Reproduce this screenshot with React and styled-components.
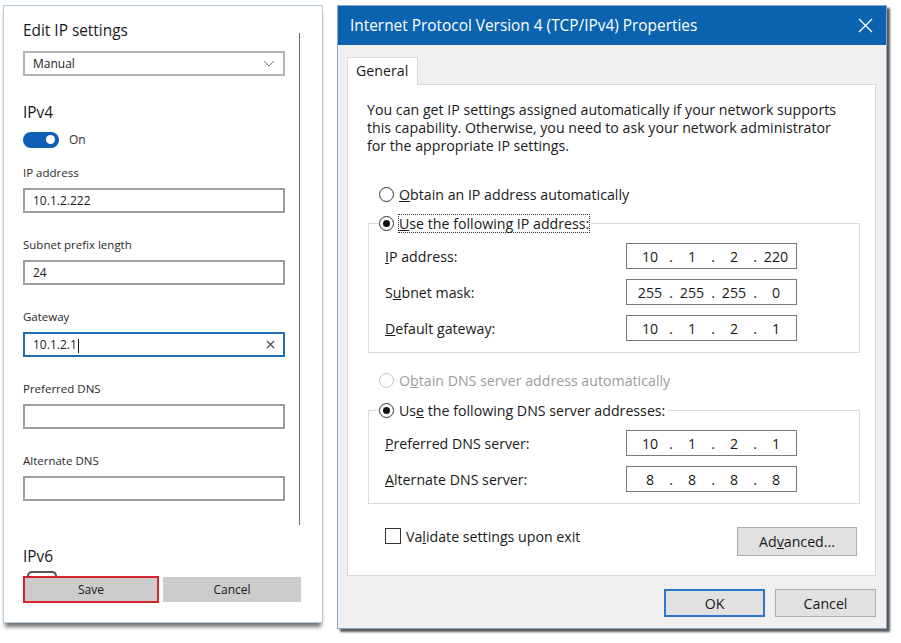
import React from "react";
import styled, { createGlobalStyle } from "styled-components";

const GlobalStyle = createGlobalStyle`
  html, body {
    margin: 0;
    padding: 0;
    background: #ffffff;
  }
  body {
    font-family: "Open Sans", "Noto Sans", sans-serif;
    color: #1b1b1b;
  }
  * {
    box-sizing: border-box;
  }
`;

const Page = styled.div`
  display: flex;
  align-items: flex-start;
  gap: 14px;
  width: 901px;
  height: 643px;
  padding: 5px 0 0 3px;
  overflow: hidden;
`;

/* ---------- left: Windows settings panel ---------- */

const SettingsPanel = styled.section`
  width: 320px;
  height: 618px;
  border: 1px solid #b5c9d9;
  box-shadow: 0 6px 4px -2px rgba(0, 0, 0, 0.55);
  padding: 15px 0 0 19px;
  display: flex;
  flex-direction: column;
`;

const ScrollArea = styled.div`
  display: flex;
  gap: 14px;
`;

const ScrollContent = styled.div`
  width: 262px;
  display: flex;
  flex-direction: column;
  padding-bottom: 24px;
`;

const ScrollThumb = styled.div`
  width: 1px;
  margin-top: 12px;
  background: #6b6b6b;
`;

const PanelTitle = styled.div`
  font-size: 15.4px;
  line-height: 20px;
  color: #1a1a1a;
`;

const Heading = styled.div`
  margin-top: ${(p) => p.$top}px;
  font-size: 15.4px;
  line-height: 20px;
  color: #1a1a1a;
`;

const Dropdown = styled.div`
  margin-top: 10px;
  height: 25px;
  border: 2px solid #b4b4b4;
  padding: 0 8px 0 8px;
  display: flex;
  align-items: center;
  justify-content: space-between;
  font-size: 12px;
`;

const ToggleRow = styled.div`
  margin-top: 8px;
  display: flex;
  align-items: center;
  gap: 10px;
  font-size: 12px;
  color: #333;
`;

const Toggle = styled.div`
  width: 36px;
  height: 16px;
  border-radius: 8px;
  background: #0f5fb4;
  display: flex;
  align-items: center;
  justify-content: flex-end;
  padding-right: 4px;
`;

const Knob = styled.div`
  width: 9px;
  height: 9px;
  border-radius: 50%;
  background: #ffffff;
`;

const FieldList = styled.div`
  margin-top: 17px;
  display: flex;
  flex-direction: column;
  gap: 24px;
`;

const Field = styled.div`
  display: flex;
  flex-direction: column;
  gap: 7px;
`;

const FieldLabel = styled.div`
  font-size: 11.5px;
  line-height: 16px;
  color: #2a2a2a;
`;

const TextBox = styled.div`
  height: 25px;
  border: 2px solid ${(p) => (p.$focused ? "#1e6fb5" : "#9d9d9d")};
  padding: 0 8px;
  display: flex;
  align-items: center;
  justify-content: space-between;
  font-size: 12px;
  color: #1a1a1a;
`;

const Caret = styled.span`
  display: inline-block;
  width: 1px;
  height: 14px;
  margin-left: 1px;
  background: #111;
  vertical-align: middle;
`;

const HiddenToggle = styled.div`
  margin: 4px 0 0 4px;
  width: 30px;
  height: 5px;
  border: 2px solid #555;
  border-bottom: none;
  border-radius: 9px 9px 0 0;
`;

const PanelButtons = styled.div`
  display: flex;
  align-items: center;
  gap: 4px;
`;

const PanelButton = styled.button`
  width: ${(p) => p.$width}px;
  height: ${(p) => (p.$marked ? 27 : 25)}px;
  background: #cccccc;
  border: ${(p) => (p.$marked ? "2px solid #d7232d" : "none")};
  font-family: inherit;
  font-size: 12px;
  color: #1a1a1a;
  padding: 0;
`;

/* ---------- right: classic TCP/IPv4 dialog ---------- */

const Dialog = styled.section`
  width: 550px;
  height: 624px;
  background: #f0f0f0;
  border: 1px solid #8aa6c4;
  box-shadow: 3px 3px 2px rgba(0, 0, 0, 0.65);
  display: flex;
  flex-direction: column;
  font-size: 14.2px;
  color: #1a1a1a;
`;

const TitleBar = styled.div`
  height: 39px;
  flex: none;
  background: #0b63b0;
  color: #ffffff;
  font-size: 15.4px;
  display: flex;
  align-items: center;
  justify-content: space-between;
  padding: 0 13px 0 12px;
`;

const DialogBody = styled.div`
  padding: 12px 10px 0 9px;
  display: flex;
  flex-direction: column;
`;

const Tab = styled.div`
  width: 71px;
  height: 28px;
  margin-bottom: -1px;
  position: relative;
  z-index: 1;
  background: #ffffff;
  border: 1px solid #d9d9d9;
  border-bottom: none;
  padding-left: 8px;
  line-height: 25px;
`;

const TabPanel = styled.div`
  height: 492px;
  background: #ffffff;
  border: 1px solid #d9d9d9;
  padding: 16px 17px 0 19px;
  display: flex;
  flex-direction: column;
`;

const Description = styled.p`
  margin: 0;
  line-height: 18px;
`;

const RadioRow = styled.div`
  margin: ${(p) => p.$top}px 0 0 12px;
  height: 20px;
  display: flex;
  align-items: center;
  gap: 5px;
  color: ${(p) => (p.$disabled ? "#9c9c9c" : "inherit")};
`;

const Radio = styled.span`
  width: 15px;
  height: 15px;
  flex: none;
  border-radius: 50%;
  border: 1px solid ${(p) => (p.$disabled ? "#c3c3c3" : "#333")};
  background: #ffffff;
  display: flex;
  align-items: center;
  justify-content: center;

  &::after {
    content: "";
    width: 7px;
    height: 7px;
    border-radius: 50%;
    background: ${(p) => (p.$checked ? "#111" : "transparent")};
  }
`;

const GroupBox = styled.fieldset`
  margin: ${(p) => p.$top}px 0 0 1px;
  width: 492px;
  border: 1px solid #dcdcdc;
  padding: 10px 0 11px 0;
  display: flex;
  flex-direction: column;
  gap: 10px;
  min-width: 0;
`;

const Legend = styled.legend`
  margin-left: 10px;
  padding: 0 2px 0 0;
  height: 20px;
  display: flex;
  align-items: center;
  gap: 5px;
`;

const FocusText = styled.span`
  outline: ${(p) => (p.$focused ? "1px dotted #333" : "none")};
  line-height: 17px;
`;

const IpRow = styled.div`
  display: flex;
  align-items: center;
  padding-left: 16px;
`;

const IpLabel = styled.div`
  width: 241px;
`;

const IpBox = styled.div`
  width: 171px;
  height: 26px;
  border: 1px solid #7a7a7a;
  display: flex;
  align-items: center;
  padding-left: 6px;
`;

const Octet = styled.span`
  width: 34px;
  text-align: center;
`;

const Dot = styled.span`
  width: 8px;
  text-align: center;
`;

const OptionsRow = styled.div`
  margin: 23px 0 0 18px;
  width: 472px;
  display: flex;
  justify-content: space-between;
  align-items: flex-start;
`;

const CheckRow = styled.div`
  display: flex;
  align-items: center;
  gap: 5px;
  height: 16px;
  margin-top: 1px;
`;

const Checkbox = styled.span`
  width: 16px;
  height: 16px;
  border: 1px solid #333;
  background: #fff;
`;

const DialogButton = styled.button`
  width: ${(p) => p.$width}px;
  height: ${(p) => p.$height}px;
  background: #e1e1e1;
  border: ${(p) => (p.$default ? "2px solid #2a78cc" : "1px solid #adadad")};
  font-family: inherit;
  font-size: 14.2px;
  color: #1a1a1a;
  padding: 0;
`;

const Footer = styled.div`
  margin-top: 13px;
  display: flex;
  justify-content: flex-end;
  gap: 10px;
`;

const ipFields = [
  { label: "IP address", value: "10.1.2.222" },
  { label: "Subnet prefix length", value: "24" },
  { label: "Gateway", value: "10.1.2.1", focused: true },
  { label: "Preferred DNS", value: "" },
  { label: "Alternate DNS", value: "" },
];

const Chevron = () => (
  <svg width="12" height="7" viewBox="0 0 12 7">
    <path d="M1 1l5 5 5-5" fill="none" stroke="#777" strokeWidth="1" />
  </svg>
);

const ClearIcon = () => (
  <svg width="9" height="9" viewBox="0 0 9 9">
    <path d="M1 1l7 7M8 1l-7 7" stroke="#444" strokeWidth="1.1" />
  </svg>
);

const CloseIcon = () => (
  <svg width="15" height="15" viewBox="0 0 15 15">
    <path d="M1 1l13 13M14 1L1 14" stroke="#ffffff" strokeWidth="1.3" />
  </svg>
);

const IpAddress = ({ value }) => {
  const parts = value.split(".");
  return (
    <IpBox>
      {parts.map((p, i) => (
        <React.Fragment key={i}>
          {i > 0 && <Dot>.</Dot>}
          <Octet>{p}</Octet>
        </React.Fragment>
      ))}
    </IpBox>
  );
};

const SettingsSide = () => (
  <SettingsPanel>
    <ScrollArea>
      <ScrollContent>
        <PanelTitle>Edit IP settings</PanelTitle>
        <Dropdown>
          <span>Manual</span>
          <Chevron />
        </Dropdown>
        <Heading $top={27}>IPv4</Heading>
        <ToggleRow>
          <Toggle>
            <Knob />
          </Toggle>
          <span>On</span>
        </ToggleRow>
        <FieldList>
          {ipFields.map((f) => (
            <Field key={f.label}>
              <FieldLabel>{f.label}</FieldLabel>
              <TextBox $focused={f.focused}>
                <span>
                  {f.value}
                  {f.focused && <Caret />}
                </span>
                {f.focused && <ClearIcon />}
              </TextBox>
            </Field>
          ))}
        </FieldList>
      </ScrollContent>
      <ScrollThumb />
    </ScrollArea>
    <Heading $top={22}>IPv6</Heading>
    <HiddenToggle />
    <PanelButtons>
      <PanelButton $width={136} $marked>
        Save
      </PanelButton>
      <PanelButton $width={138}>Cancel</PanelButton>
    </PanelButtons>
  </SettingsPanel>
);

const PropertiesDialog = () => (
  <Dialog>
    <TitleBar>
      <span>Internet Protocol Version 4 (TCP/IPv4) Properties</span>
      <CloseIcon />
    </TitleBar>
    <DialogBody>
      <Tab>General</Tab>
      <TabPanel>
        <Description>
          You can get IP settings assigned automatically if your network supports
          <br />
          this capability. Otherwise, you need to ask your network administrator
          <br />
          for the appropriate IP settings.
        </Description>

        <RadioRow $top={29}>
          <Radio />
          <span>
            <u>O</u>btain an IP address automatically
          </span>
        </RadioRow>

        <GroupBox $top={9}>
          <Legend>
            <Radio $checked />
            <FocusText $focused>
              <u>U</u>se the following IP address:
            </FocusText>
          </Legend>
          <IpRow>
            <IpLabel>
              <u>I</u>P address:
            </IpLabel>
            <IpAddress value="10.1.2.220" />
          </IpRow>
          <IpRow>
            <IpLabel>
              S<u>u</u>bnet mask:
            </IpLabel>
            <IpAddress value="255.255.255.0" />
          </IpRow>
          <IpRow>
            <IpLabel>
              <u>D</u>efault gateway:
            </IpLabel>
            <IpAddress value="10.1.2.1" />
          </IpRow>
        </GroupBox>

        <RadioRow $top={17} $disabled>
          <Radio $disabled />
          <span>
            O<u>b</u>tain DNS server address automatically
          </span>
        </RadioRow>

        <GroupBox $top={10}>
          <Legend>
            <Radio $checked />
            <FocusText>
              Us<u>e</u> the following DNS server addresses:
            </FocusText>
          </Legend>
          <IpRow>
            <IpLabel>
              <u>P</u>referred DNS server:
            </IpLabel>
            <IpAddress value="10.1.2.1" />
          </IpRow>
          <IpRow>
            <IpLabel>
              <u>A</u>lternate DNS server:
            </IpLabel>
            <IpAddress value="8.8.8.8" />
          </IpRow>
        </GroupBox>

        <OptionsRow>
          <CheckRow>
            <Checkbox />
            <span>
              Va<u>l</u>idate settings upon exit
            </span>
          </CheckRow>
          <DialogButton $width={120} $height={29}>
            Ad<u>v</u>anced...
          </DialogButton>
        </OptionsRow>
      </TabPanel>
      <Footer>
        <DialogButton $width={101} $height={28} $default>
          OK
        </DialogButton>
        <DialogButton $width={101} $height={28}>
          Cancel
        </DialogButton>
      </Footer>
    </DialogBody>
  </Dialog>
);

export default function App() {
  return (
    <>
      <GlobalStyle />
      <Page>
        <SettingsSide />
        <PropertiesDialog />
      </Page>
    </>
  );
}
